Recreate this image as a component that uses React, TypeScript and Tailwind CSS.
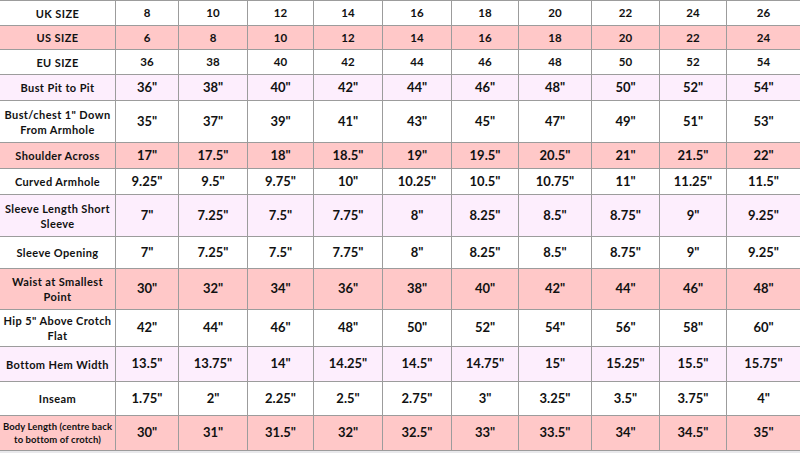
const COLS = ['8', '10', '12', '14', '16', '18', '20', '22', '24', '26']

type Row = { label: string[]; values: string[]; bg: string; h: string; small?: boolean; inch?: boolean }

const q = (v: string[]) => v.map(x => x + '"')

const ROWS: Row[] = [
  { label: ['UK SIZE'], values: COLS, bg: 'bg-white', h: 'h-[25px]' },
  { label: ['US SIZE'], values: ['6', '8', '10', '12', '14', '16', '18', '20', '22', '24'], bg: 'bg-[#ffc8c8]', h: 'h-[24px]' },
  { label: ['EU SIZE'], values: ['36', '38', '40', '42', '44', '46', '48', '50', '52', '54'], bg: 'bg-white', h: 'h-[25px]' },
  { label: ['Bust Pit to Pit'], values: q(['36', '38', '40', '42', '44', '46', '48', '50', '52', '54']), bg: 'bg-[#fdeefd]', h: 'h-[26px]', inch: true },
  { label: ['Bust/chest 1" Down', 'From Armhole'], values: q(['35', '37', '39', '41', '43', '45', '47', '49', '51', '53']), bg: 'bg-white', h: 'h-[42px]', inch: true },
  { label: ['Shoulder Across'], values: q(['17', '17.5', '18', '18.5', '19', '19.5', '20.5', '21', '21.5', '22']), bg: 'bg-[#ffc8c8]', h: 'h-[26px]', inch: true },
  { label: ['Curved Armhole'], values: q(['9.25', '9.5', '9.75', '10', '10.25', '10.5', '10.75', '11', '11.25', '11.5']), bg: 'bg-white', h: 'h-[26px]', inch: true },
  { label: ['Sleeve Length Short', 'Sleeve'], values: q(['7', '7.25', '7.5', '7.75', '8', '8.25', '8.5', '8.75', '9', '9.25']), bg: 'bg-[#fdeefd]', h: 'h-[42px]', inch: true },
  { label: ['Sleeve Opening'], values: q(['7', '7.25', '7.5', '7.75', '8', '8.25', '8.5', '8.75', '9', '9.25']), bg: 'bg-white', h: 'h-[32px]', inch: true },
  { label: ['Waist at Smallest', 'Point'], values: q(['30', '32', '34', '36', '38', '40', '42', '44', '46', '48']), bg: 'bg-[#ffc8c8]', h: 'h-[41px]', inch: true },
  { label: ['Hip 5" Above Crotch', 'Flat'], values: q(['42', '44', '46', '48', '50', '52', '54', '56', '58', '60']), bg: 'bg-white', h: 'h-[37px]', inch: true },
  { label: ['Bottom Hem Width'], values: q(['13.5', '13.75', '14', '14.25', '14.5', '14.75', '15', '15.25', '15.5', '15.75']), bg: 'bg-[#fdeefd]', h: 'h-[35px]', inch: true },
  { label: ['Inseam'], values: q(['1.75', '2', '2.25', '2.5', '2.75', '3', '3.25', '3.5', '3.75', '4']), bg: 'bg-white', h: 'h-[34px]', inch: true },
  { label: ['Body Length (centre back', 'to bottom of crotch)'], values: q(['30', '31', '31.5', '32', '32.5', '33', '33.5', '34', '34.5', '35']), bg: 'bg-[#ffc8c8]', h: 'h-[35px]', small: true, inch: true },
]

export default function App() {
  return (
    <div className="w-[800px] h-[453px] bg-[#e9e9ec] overflow-hidden font-['Lato',sans-serif] text-[#111] font-bold">
      <div className="grid grid-cols-[116px_63px_69px_66px_69px_69px_67px_73px_68px_67px_73px] border-t border-[#9c9c9c]">
        {ROWS.map(row => (
          <div key={row.label[0]} className="contents">
            <div className={`${row.bg} ${row.h} border-r border-b border-[#9c9c9c] flex flex-col items-center justify-center text-center whitespace-nowrap ${row.small ? 'text-[9.5px] tracking-[0.1px] leading-[13px]' : 'text-[11px] tracking-[0.4px] leading-[15px]'}`}>
              {row.label.map(l => <span key={l}>{l}</span>)}
            </div>
            {row.values.map((v, i) => (
              <div
                key={i}
                className={`${row.bg} ${row.h} border-b border-[#9c9c9c] flex items-center justify-center ${i < 9 ? 'border-r' : ''} ${row.inch ? 'text-[13px]' : 'text-[11.5px]'}`}
              >
                {v}
              </div>
            ))}
          </div>
        ))}
      </div>
    </div>
  )
}
